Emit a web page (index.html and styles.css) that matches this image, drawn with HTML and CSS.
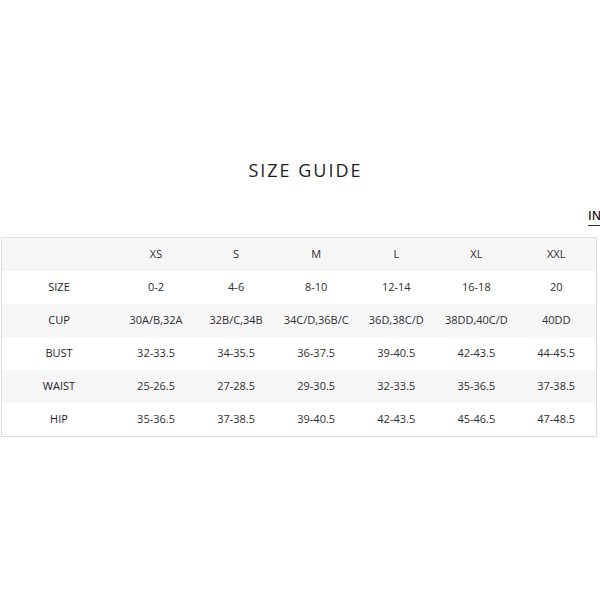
FILE: index.html
```html
<!DOCTYPE html>
<html>
<head>
<meta charset="utf-8">
<link rel="stylesheet" href="styles.css">
</head>
<body>
<div class="page">
  <h1 class="title">SIZE GUIDE</h1>
  <div class="units"><span class="unit-active">IN</span></div>
  <table class="chart">
    <tr class="head"><td></td><td>XS</td><td>S</td><td>M</td><td>L</td><td>XL</td><td>XXL</td></tr>
    <tr><td>SIZE</td><td>0-2</td><td>4-6</td><td>8-10</td><td>12-14</td><td>16-18</td><td>20</td></tr>
    <tr class="alt"><td>CUP</td><td>30A/B,32A</td><td>32B/C,34B</td><td>34C/D,36B/C</td><td>36D,38C/D</td><td>38DD,40C/D</td><td>40DD</td></tr>
    <tr><td>BUST</td><td>32-33.5</td><td>34-35.5</td><td>36-37.5</td><td>39-40.5</td><td>42-43.5</td><td>44-45.5</td></tr>
    <tr class="alt"><td>WAIST</td><td>25-26.5</td><td>27-28.5</td><td>29-30.5</td><td>32-33.5</td><td>35-36.5</td><td>37-38.5</td></tr>
    <tr><td>HIP</td><td>35-36.5</td><td>37-38.5</td><td>39-40.5</td><td>42-43.5</td><td>45-46.5</td><td>47-48.5</td></tr>
  </table>
</div>
</body>
</html>
```
FILE: styles.css
```css
html, body {
  margin: 0;
  padding: 0;
  background: #fff;
}
.page {
  width: 600px;
  height: 600px;
  padding: 158px 0 0 1px;
  box-sizing: border-box;
  font-family: "Open Sans", "Liberation Sans", sans-serif;
  color: #2a2a2a;
  overflow: hidden;
}
.title {
  margin: 0;
  text-align: center;
  font-size: 18px;
  font-weight: 400;
  letter-spacing: 2px;
  line-height: 24px;
  color: #1e1e1e;
  padding-left: 10px;
}
.units {
  display: flex;
  justify-content: flex-end;
  margin-top: 26px;
  height: 29px;
}
.unit-active {
  display: block;
  font-size: 12px;
  line-height: 16px;
  font-weight: 600;
  color: #222;
  margin-right: -10px;
  padding-bottom: 1px;
  border-bottom: 1.5px solid #333;
  height: 16px;
  width: 22px;
}
.chart {
  width: 596px;
  border-collapse: collapse;
  border: 1px solid #dcdcdc;
  table-layout: fixed;
  font-size: 11px;
}
.chart td {
  height: 31px;
  padding: 0 0 2px;
  text-align: center;
  color: #2e2e2e;
}
.chart td:first-child {
  width: 114px;
  color: #1e1e1e;
}
.chart .head td,
.chart .alt td {
  background: #f6f6f6;
}
```
